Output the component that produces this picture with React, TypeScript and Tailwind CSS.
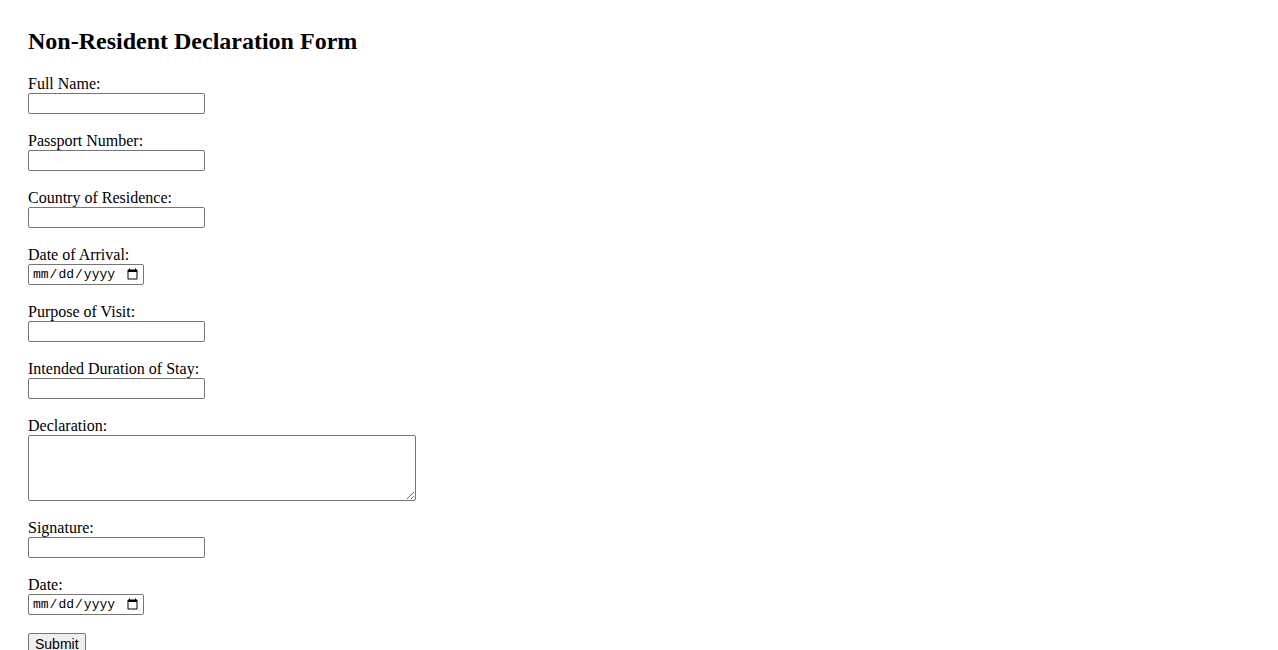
import React from "react";

function TextField({ label }: { label: string }) {
  return (
    <div className="mb-[18px]">
      <label className="block h-[18px] leading-[18px]">{label}</label>
      <input
        type="text"
        className="block w-[177px] h-[21px] border border-[#767676] rounded-[2px] bg-white px-[2px] text-[13px] font-['Liberation_Sans',sans-serif]"
      />
    </div>
  );
}

function DateField({ label }: { label: string }) {
  return (
    <div className="mb-[18px]">
      <label className="block h-[18px] leading-[18px]">{label}</label>
      <input
        type="date"
        className="block w-[116px] h-[21px] border border-[#767676] rounded-[2px] bg-white pl-[3px] pr-[2px] text-[13px] text-black font-['Liberation_Mono',monospace]"
      />
    </div>
  );
}

export default function App() {
  return (
    <div className="min-h-[650px] bg-white text-black text-[16px] font-['Liberation_Serif',serif] pl-[28px] pt-[27px]">
      <h2 className="text-[24px] leading-[28px] font-bold mb-[20px]">Non-Resident Declaration Form</h2>
      <form onSubmit={(e) => e.preventDefault()}>
        <TextField label="Full Name:" />
        <TextField label="Passport Number:" />
        <TextField label="Country of Residence:" />
        <DateField label="Date of Arrival:" />
        <TextField label="Purpose of Visit:" />
        <TextField label="Intended Duration of Stay:" />
        <div className="mb-[18px]">
          <label className="block h-[18px] leading-[18px]">Declaration:</label>
          <textarea className="block w-[388px] h-[66px] border border-[#767676] rounded-[2px] bg-white p-[2px] text-[13px] font-['Liberation_Mono',monospace]" />
        </div>
        <TextField label="Signature:" />
        <DateField label="Date:" />
        <button
          type="submit"
          className="block mt-[1px] h-[22px] px-[6px] border border-[#767676] rounded-[2px] bg-[#efefef] text-[14px] leading-[18px] font-['Liberation_Sans',sans-serif] text-black"
        >
          Submit
        </button>
      </form>
    </div>
  );
}
